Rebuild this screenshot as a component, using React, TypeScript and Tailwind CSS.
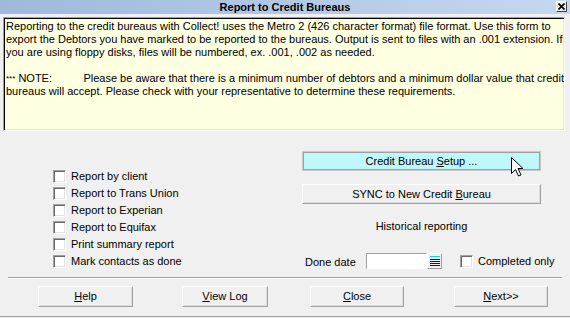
const checks = [
  "Report by client",
  "Report to Trans Union",
  "Report to Experian",
  "Report to Equifax",
  "Print summary report",
  "Mark contacts as done",
]

function Check() {
  return (
    <span className="box-border block w-[13px] h-[13px] shrink-0 bg-white border border-t-[#a0a0a0] border-l-[#a0a0a0] border-r-white border-b-white shadow-[inset_1px_1px_0_#696969,inset_-1px_-1px_0_#e3e3e3]" />
  )
}

function Btn({ children, className = "" }: { children: React.ReactNode; className?: string }) {
  return (
    <div
      className={`box-border flex items-center justify-center bg-[#f0f0f0] border border-t-white border-l-white border-r-[#a0a0a0] border-b-[#a0a0a0] shadow-[inset_-1px_-1px_0_#dcdcdc] ${className}`}
    >
      {children}
    </div>
  )
}

export default function App() {
  return (
    <div className="relative w-[570px] h-[318px] overflow-hidden bg-[#f0f0f0] text-[11px] leading-[13px] text-black [font-family:'Liberation_Sans',Arial,sans-serif]">
      {/* Title bar */}
      <div className="relative h-[14px] flex items-center justify-center bg-gradient-to-r from-[#9fb9db] to-[#c5d8ee]">
        <span className="font-bold text-[11px]">Report to Credit Bureaus</span>
        <div className="absolute right-[3px] top-[1px] box-border w-[11px] h-[11px] flex items-center justify-center bg-[#e8e8e8] border border-t-white border-l-white border-r-[#404040] border-b-[#404040]">
          <svg width="7" height="7" viewBox="0 0 7 7">
            <path d="M0.5 0.5 L6.5 6.5 M6.5 0.5 L0.5 6.5" stroke="#000" strokeWidth="1.6" />
          </svg>
        </div>
      </div>

      {/* Info box */}
      <div className="mt-[3px] ml-[3px] box-border w-[562px] h-[114px] bg-[#ffffe1] border border-t-[#a0a0a0] border-l-[#a0a0a0] border-r-white border-b-white shadow-[inset_1px_1px_0_#000,inset_-1px_-1px_0_#e3e3e3] pl-[2px] pt-[2px] whitespace-nowrap">
        <div>Reporting to the credit bureaus with Collect! uses the Metro 2 (426 character format) file format. Use this form to</div>
        <div>export the Debtors you have marked to be reported to the bureaus. Output is sent to files with an .001 extension. If</div>
        <div>you are using floppy disks, files will be numbered, ex. .001, .002 as needed.</div>
        <div className="h-[13px]" />
        <div className="flex">
          <span className="w-[82px]">
            <span className="text-[8px] align-top">***</span> NOTE:
          </span>
          <span>Please be aware that there is a minimum number of debtors and a minimum dollar value that credit</span>
        </div>
        <div>bureaus will accept. Please check with your representative to determine these requirements.</div>
      </div>

      {/* Middle */}
      <div className="flex h-[146px]">
        <div className="w-[302px] pl-[53px] pt-[37px]">
          {checks.map((c) => (
            <div key={c} className="h-[17px] flex items-center gap-[5px]">
              <Check />
              <span>{c}</span>
            </div>
          ))}
        </div>
        <div className="w-[239px] pt-[20px] flex flex-col">
          <div className="box-border h-[20px] flex items-center justify-center bg-[#bff8fb] border border-[#c8c8c8] shadow-[inset_0_0_0_1px_#a0a0a0]">
            Credit Bureau <span className="underline ml-[3px]">S</span>etup ...
          </div>
          <Btn className="h-[20px] mt-[13px]">
            SYNC to New Credit <span className="underline ml-[3px]">B</span>ureau
          </Btn>
          <div className="mt-[16px] text-center">Historical reporting</div>
          <div className="mt-[20px] flex items-center h-[16px] whitespace-nowrap">
            <span className="ml-[3px] w-[61px] mt-[2px] shrink-0">Done date</span>
            <div className="box-border w-[61px] h-[16px] shrink-0 bg-white border border-t-[#a0a0a0] border-l-[#a0a0a0] border-r-white border-b-white" />
            <div className="box-border w-[15px] h-[16px] shrink-0 flex items-center justify-center bg-[#f0f0f0] border border-t-white border-l-white border-r-[#a0a0a0] border-b-[#a0a0a0]">
              <svg width="10" height="10" viewBox="0 0 10 10">
                <rect x="0" y="0" width="10" height="1" fill="#00e0e8" />
                <rect x="0" y="3" width="10" height="1" fill="#0000ff" />
                <rect x="0" y="5" width="10" height="1" fill="#0000ff" />
                <rect x="0" y="7" width="10" height="1" fill="#0000ff" />
                <rect x="0" y="9" width="10" height="1" fill="#0000ff" />
              </svg>
            </div>
            <div className="ml-[18px] flex items-center gap-[5px] shrink-0">
              <Check />
              <span>Completed only</span>
            </div>
          </div>
        </div>
      </div>

      {/* Separator */}
      <div className="mx-[8px] h-[2px] border-t border-t-[#a0a0a0] border-b border-b-white" />

      {/* Bottom buttons */}
      <div className="flex pt-[7px]">
        <Btn className="ml-[38px] w-[95px] h-[21px]">
          <span className="underline">H</span>elp
        </Btn>
        <Btn className="ml-[49px] w-[86px] h-[21px]">
          <span className="underline">V</span>iew Log
        </Btn>
        <Btn className="ml-[42px] w-[94px] h-[21px]">
          <span className="underline">C</span>lose
        </Btn>
        <Btn className="ml-[50px] w-[94px] h-[21px]">
          <span className="underline">N</span>ext&gt;&gt;
        </Btn>
      </div>

      <div className="absolute left-0 right-0 bottom-[1px] h-[1px] bg-[#a0a0a0]" />

      {/* Mouse cursor */}
      <svg className="absolute left-[511px] top-[157px]" width="13" height="20" viewBox="0 0 13 20">
        <path d="M0.5 0.5 L0.5 16.5 L4.5 12.5 L7.5 19 L10 18 L7 11.5 L12 11.5 Z" fill="#fff" stroke="#000" strokeWidth="1" />
      </svg>
    </div>
  )
}
